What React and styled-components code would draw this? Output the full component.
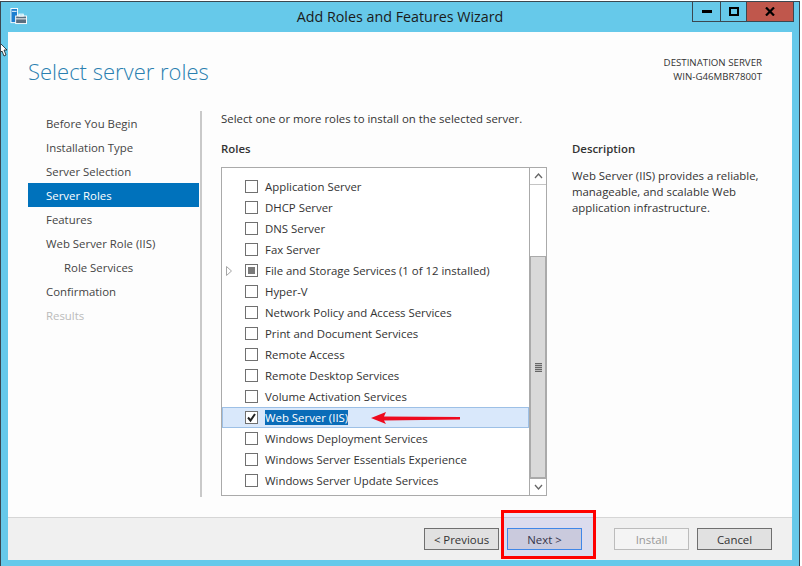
import React from "react";
import styled, {createGlobalStyle} from "styled-components";

const roles = [
  {name: "Application Server"},
  {name: "DHCP Server"},
  {name: "DNS Server"},
  {name: "Fax Server"},
  {name: "File and Storage Services (1 of 12 installed)", partial: true, expandable: true},
  {name: "Hyper-V"},
  {name: "Network Policy and Access Services"},
  {name: "Print and Document Services"},
  {name: "Remote Access"},
  {name: "Remote Desktop Services"},
  {name: "Volume Activation Services"},
  {name: "Web Server (IIS)", checked: true, selected: true},
  {name: "Windows Deployment Services"},
  {name: "Windows Server Essentials Experience"},
  {name: "Windows Server Update Services"}
];

const steps = [
  {label: "Before You Begin"},
  {label: "Installation Type"},
  {label: "Server Selection"},
  {label: "Server Roles", active: true},
  {label: "Features"},
  {label: "Web Server Role (IIS)"},
  {label: "Role Services", nested: true},
  {label: "Confirmation"},
  {label: "Results", disabled: true}
];

const GlobalStyle = createGlobalStyle`
  html, body {
    margin: 0;
    padding: 0;
    background: #fff;
  }
  body {
    font-family: "Open Sans", "Noto Sans", sans-serif;
    font-size: 11.4px;
    color: #333;
  }
`;

const Wizard = styled.div`
  position: relative;
  width: 800px;
  height: 565px;
  margin-top: 1px;
  box-sizing: border-box;
  display: flex;
  flex-direction: column;
  background: #66c9ea;
  border-top: 1px solid #3b4750;
  border-left: 1px solid #3b4750;
  border-right: 1px solid #3b4750;
  overflow: hidden;
`;

const TitleBar = styled.div`
  position: relative;
  height: 30px;
  flex: none;
  display: flex;
  justify-content: space-between;
  padding-left: 9px;
`;

const TitleText = styled.div`
  position: absolute;
  left: 0;
  right: 0;
  top: 5px;
  text-align: center;
  font-size: 14.3px;
  line-height: 20px;
  color: #1b1b1b;
`;

const AppIcon = styled.svg`
  width: 17px;
  height: 17px;
  margin-top: 6px;
`;

const Controls = styled.div`
  display: flex;
  height: 19px;
  margin-right: 5px;
  border: 1px solid #3b4750;
  border-top: 0;
`;

const ControlButton = styled.div`
  width: ${p => p.$width}px;
  display: flex;
  align-items: center;
  justify-content: center;
  background: ${p => p.$bg || "transparent"};
  & + & {
    border-left: 1px solid #3b4750;
  }
`;

const ClientArea = styled.div`
  flex: 1;
  margin: 0 7px 6px 7px;
  display: flex;
  flex-direction: column;
  background: #fdfdfd;
  min-height: 0;
`;

const Header = styled.div`
  height: 79px;
  flex: none;
  display: flex;
  justify-content: space-between;
  padding: 0 30px 0 20px;
`;

const PageTitle = styled.h1`
  margin: 23px 0 0;
  font-weight: 300;
  font-size: 22px;
  line-height: 32px;
  color: #2a7fb0;
`;

const Destination = styled.div`
  margin-top: 24px;
  text-align: right;
  font-size: 9.7px;
  line-height: 14px;
  color: #333;
`;

const Main = styled.div`
  flex: 1;
  display: flex;
  padding-left: 20px;
  min-height: 0;
`;

const Nav = styled.div`
  width: 171px;
  height: 386px;
  box-sizing: border-box;
  flex: none;
`;

const NavItem = styled.div`
  height: 24px;
  line-height: 26px;
  padding-left: ${p => (p.$nested ? 36 : 18)}px;
  background: ${p => (p.$active ? "#0072bc" : "transparent")};
  color: ${p => (p.$active ? "#fff" : p.$disabled ? "#bbb" : "#444")};
`;

const NavDivider = styled.div`
  width: 2px;
  height: 386px;
  margin-left: 1px;
  flex: none;
  background: #c9c9c9;
`;

const Content = styled.div`
  padding-left: 19px;
  flex: 1;
`;

const Intro = styled.div`
  height: 30px;
  line-height: 14px;
  padding-top: 1px;
`;

const Columns = styled.div`
  display: flex;
`;

const RolesColumn = styled.div`
  width: 326px;
  flex: none;
`;

const DescriptionColumn = styled.div`
  width: 200px;
  margin-left: 25px;
`;

const SectionLabel = styled.div`
  font-weight: 600;
  height: 25px;
  line-height: 14px;
`;

const DescriptionText = styled.div`
  margin-top: 1px;
  line-height: 16px;
  color: #333;
`;

const ListBox = styled.div`
  height: 329px;
  box-sizing: border-box;
  display: flex;
  border: 1px solid #aaa;
  background: #fff;
`;

const RoleList = styled.div`
  flex: 1;
  padding-top: 8px;
  min-width: 0;
`;

const RoleRow = styled.div`
  height: 21px;
  box-sizing: border-box;
  display: flex;
  align-items: center;
  background: ${p => (p.$selected ? "#d9e8fb" : "transparent")};
  border: 1px solid ${p => (p.$selected ? "#9dc0e6" : "transparent")};
`;

const Expander = styled.div`
  width: 22px;
  flex: none;
  padding-left: 3px;
  box-sizing: border-box;
  display: flex;
`;

const CheckBox = styled.div`
  width: 13px;
  height: 13px;
  box-sizing: border-box;
  flex: none;
  margin-right: 7px;
  border: 1px solid #707070;
  background: #fff;
  display: flex;
  align-items: center;
  justify-content: center;
`;

const PartialMark = styled.div`
  width: 7px;
  height: 7px;
  background: #7a7a7a;
`;

const RoleName = styled.span`
  line-height: 15px;
  margin-top: -1px;
  color: ${p => (p.$selected ? "#fff" : "#333")};
  background: ${p => (p.$selected ? "#0a6cb8" : "transparent")};
`;

const ScrollBar = styled.div`
  width: 16px;
  flex: none;
  display: flex;
  flex-direction: column;
  border-left: 1px solid #aaa;
`;

const ScrollArrow = styled.div`
  height: 16px;
  flex: none;
  display: flex;
  align-items: center;
  justify-content: center;
  background: #fff;
  ${p => (p.$top ? "border-bottom: 1px solid #c4c4c4;" : "border-top: 1px solid #aaa;")}
`;

const ScrollTrack = styled.div`
  flex: 1;
  display: flex;
  flex-direction: column;
  justify-content: flex-end;
  background: #fff;
`;

const ScrollThumb = styled.div`
  height: 222px;
  box-sizing: border-box;
  background: #d9d9d9;
  border: 1px solid #aaa;
  display: flex;
  align-items: center;
  justify-content: center;
`;

const Grip = styled.div`
  width: 7px;
  height: 9px;
  background: repeating-linear-gradient(#666 0 1px, #bbb 1px 2px);
`;

const Footer = styled.div`
  position: relative;
  height: 43px;
  flex: none;
  margin-top: auto;
  box-sizing: border-box;
  padding: 10px 20px 0 0;
  background: #f0f0f0;
  border-top: 1px solid #d6d6d6;
  display: flex;
  justify-content: flex-end;
`;

const Button = styled.div`
  width: 75px;
  height: 22px;
  box-sizing: border-box;
  margin-left: ${p => p.$gap || 8}px;
  display: flex;
  align-items: center;
  justify-content: center;
  background: ${p => (p.$default ? "#dcdcdc" : p.$disabled ? "#f4f4f4" : "#e1e1e1")};
  border: 1px solid ${p => (p.$default ? "#3f8fe8" : p.$disabled ? "#bcbcbc" : "#6f6f6f")};
  color: ${p => (p.$disabled ? "#999" : "#333")};
`;

/* annotations sitting on top of the screenshot */
const NextHighlight = styled.div`
  position: absolute;
  left: 493px;
  top: -8px;
  width: 95px;
  height: 49px;
  box-sizing: border-box;
  border: 3px solid #ff0000;
  background: rgba(70, 70, 230, 0.12);
`;

const Arrow = styled.svg`
  position: absolute;
  left: 370px;
  top: 409px;
  width: 92px;
  height: 14px;
`;

const Cursor = styled.svg`
  position: absolute;
  left: -1px;
  top: 41px;
  width: 8px;
  height: 14px;
`;

const App = () => (
  <>
    <GlobalStyle />
    <Wizard>
      <TitleBar>
        <AppIcon viewBox="0 0 18 18">
          <rect x="1" y="0.5" width="7" height="15" fill="#1c7fd0" stroke="#fff" />
          <rect x="2" y="3" width="5" height="1" fill="#fff" />
          <rect x="6" y="8.5" width="11.5" height="8" fill="#5a6f80" stroke="#fff" />
          <rect x="9.5" y="6.5" width="4.5" height="2" fill="none" stroke="#fff" />
          <rect x="6" y="11" width="11" height="1" fill="#fff" />
        </AppIcon>
        <TitleText>Add Roles and Features Wizard</TitleText>
        <Controls>
          <ControlButton $width={27}>
            <svg width="10" height="3"><rect width="10" height="3" fill="#000" /></svg>
          </ControlButton>
          <ControlButton $width={25}>
            <svg width="10" height="9"><rect x="1" y="1" width="8" height="7" fill="none" stroke="#000" strokeWidth="2" /></svg>
          </ControlButton>
          <ControlButton $width={46} $bg="#c0574c">
            <svg width="10" height="9" viewBox="0 0 10 9"><path d="M1 .5l8 8M9 .5l-8 8" stroke="#000" strokeWidth="2.2" /></svg>
          </ControlButton>
        </Controls>
      </TitleBar>
      <ClientArea>
        <Header>
          <PageTitle>Select server roles</PageTitle>
          <Destination>
            DESTINATION SERVER
            <br />
            WIN-G46MBR7800T
          </Destination>
        </Header>
        <Main>
          <Nav>
            {steps.map(step => (
              <NavItem key={step.label} $active={step.active} $nested={step.nested} $disabled={step.disabled}>
                {step.label}
              </NavItem>
            ))}
          </Nav>
          <NavDivider />
          <Content>
            <Intro>Select one or more roles to install on the selected server.</Intro>
            <Columns>
              <RolesColumn>
                <SectionLabel>Roles</SectionLabel>
                <ListBox>
                  <RoleList>
                    {roles.map(role => (
                      <RoleRow key={role.name} $selected={role.selected}>
                        <Expander>
                          {role.expandable && (
                            <svg width="6" height="10" viewBox="0 0 6 10">
                              <path d="M.5.5L5.5 5 .5 9.5z" fill="#fff" stroke="#a6a6a6" />
                            </svg>
                          )}
                        </Expander>
                        <CheckBox>
                          {role.partial && <PartialMark />}
                          {role.checked && (
                            <svg width="11" height="11" viewBox="0 0 11 11">
                              <path d="M2 5.5l2.5 3L9 2" fill="none" stroke="#222" strokeWidth="2" />
                            </svg>
                          )}
                        </CheckBox>
                        <RoleName $selected={role.selected}>{role.name}</RoleName>
                      </RoleRow>
                    ))}
                  </RoleList>
                  <ScrollBar>
                    <ScrollArrow $top>
                      <svg width="9" height="6" viewBox="0 0 9 6">
                        <path d="M1 5l3.5-4L8 5" fill="none" stroke="#666" strokeWidth="1.3" />
                      </svg>
                    </ScrollArrow>
                    <ScrollTrack>
                      <ScrollThumb>
                        <Grip />
                      </ScrollThumb>
                    </ScrollTrack>
                    <ScrollArrow>
                      <svg width="9" height="6" viewBox="0 0 9 6">
                        <path d="M1 1l3.5 4L8 1" fill="none" stroke="#666" strokeWidth="1.3" />
                      </svg>
                    </ScrollArrow>
                  </ScrollBar>
                </ListBox>
              </RolesColumn>
              <DescriptionColumn>
                <SectionLabel>Description</SectionLabel>
                <DescriptionText>
                  Web Server (IIS) provides a reliable, manageable, and scalable Web application infrastructure.
                </DescriptionText>
              </DescriptionColumn>
            </Columns>
          </Content>
        </Main>
        <Footer>
          <Button>&lt; Previous</Button>
          <Button $default>Next &gt;</Button>
          <Button $disabled $gap={32}>Install</Button>
          <Button>Cancel</Button>
          <NextHighlight />
        </Footer>
      </ClientArea>
      <Arrow viewBox="0 0 92 14">
        <path d="M0 7L15 1 13 5.5 89 6V8.5L13 9.5 15 13z" fill="#ee0a1e" />
      </Arrow>
      <Cursor viewBox="0 0 8 14">
        <path d="M0 0l7 7H4l2 5-2 1-2-5-2 2z" fill="#fff" stroke="#000" strokeWidth=".7" />
      </Cursor>
    </Wizard>
  </>
);

export default App;
